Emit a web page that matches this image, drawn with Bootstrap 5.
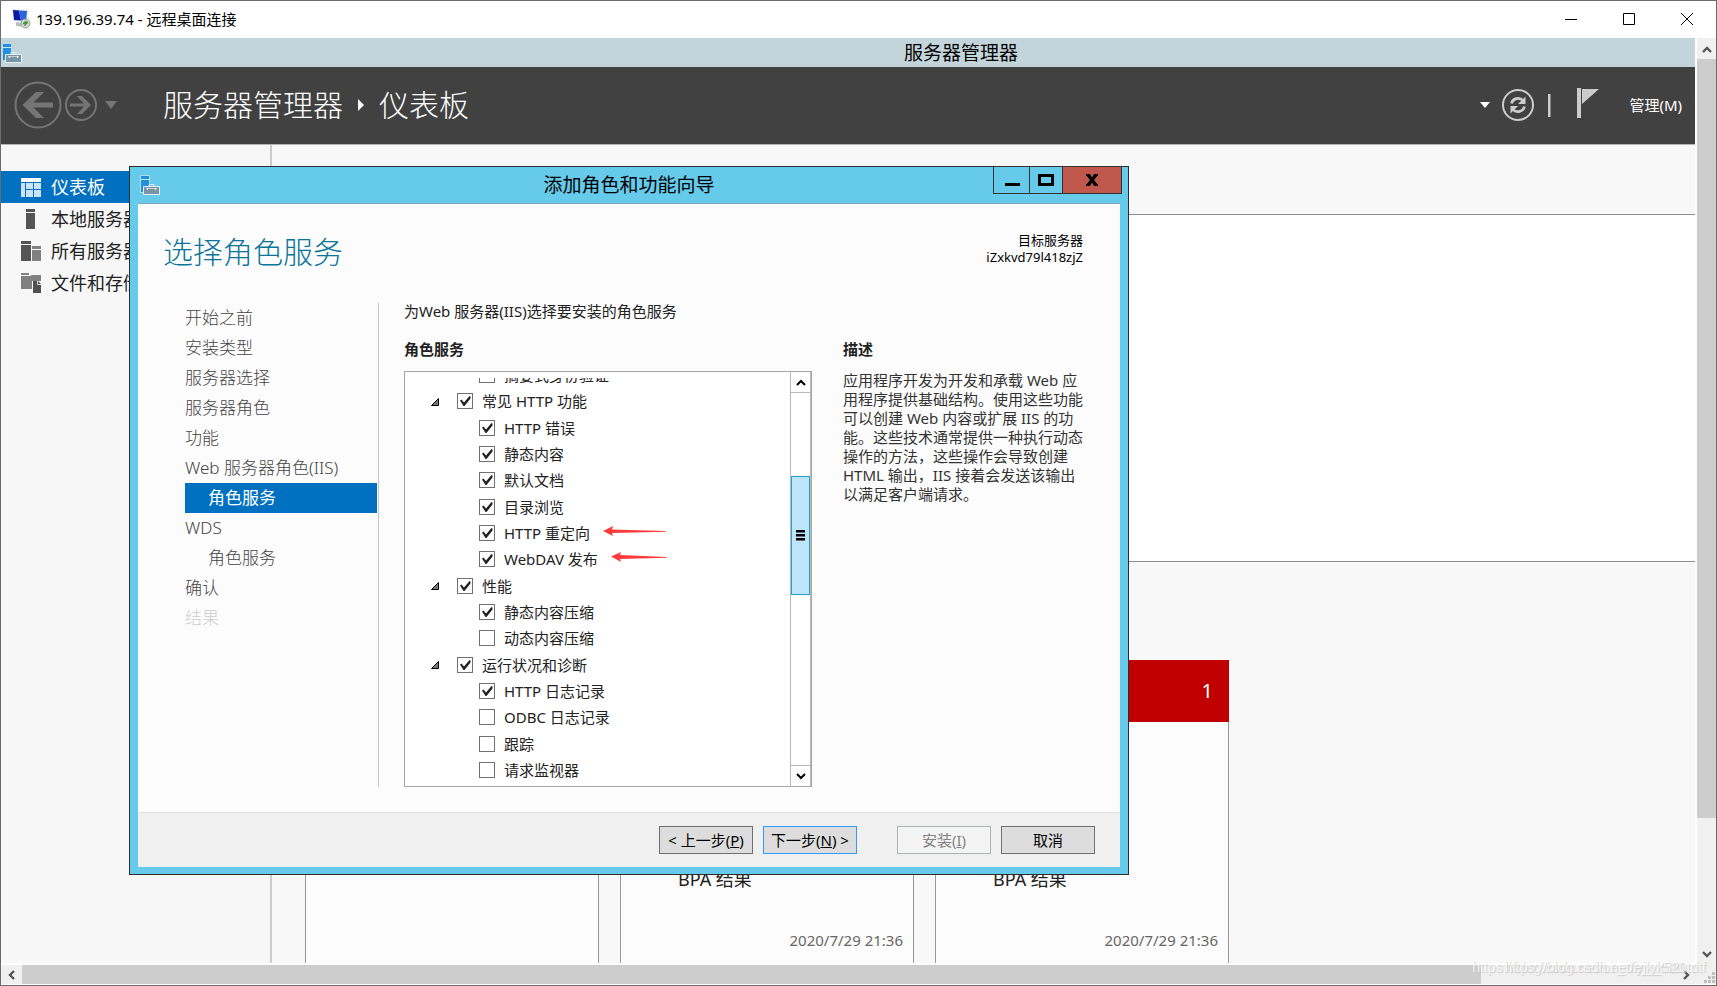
<!DOCTYPE html>
<html lang="zh-CN">
<head>
<meta charset="utf-8">
<meta name="viewport" content="width=device-width, initial-scale=1">
<title>139.196.39.74 - 远程桌面连接</title>
<link href="https://cdn.jsdelivr.net/npm/bootstrap@5.3.0/dist/css/bootstrap.min.css" rel="stylesheet">
<style>
:root { --ui: "Noto Sans", "Noto Sans CJK SC", sans-serif; --accent: #0070c0; --aero: #66caea; }
body { font: 15px/20px var(--ui); color: #222; background: #fff; }
button { font-family: inherit; color: inherit; }
svg { display: block; flex: none; }
a { color: inherit; text-decoration: none; }
.session { height: 100vh; border: 1px solid #6b6b6b; }
.session-title { height: 37px; background: #fff; color: #000; padding-left: 10px; padding-bottom: 1px; }
.session-name { margin-left: 5px; }
.cap { width: 58px; height: 36px; border: 0; background: none; padding: 0; display: grid; place-items: center; }
.remote-row { min-height: 0; }
.remote { background: #f8f8f8; margin: 0 1px 1px 0; border: solid #fff; border-width: 0 1px 1px 0; }

/* server manager */
.sm-title { height: 29px; background: #c3d5db; color: #000; padding-left: 1px; }
.sm-title h1 { font-size: 19px; line-height: 29px; font-weight: 400; margin: 0; padding: 2px 0 0 205px; }
.sm-bar { height: 78px; background: #414141; color: #fff; padding: 0 13px 1px 13px; border-bottom: 1px solid #b5b5b5; }
.plain { border: 0; background: none; padding: 0; }
.crumbs { font-size: 30px; line-height: 40px; font-weight: 300; margin-left: 46px; gap: 15px; }
.refresh { margin: 0 13px 0 11px; }
.sm-side { width: 271px; background: #f7f7f7; border-right: 2px solid #ccc; padding-top: 26px; }
.side-item { height: 32px; font-size: 18px; padding-left: 20px; gap: 10px; color: #222; white-space: nowrap; }
.side-item.on { background: var(--accent); color: #fff; }
.sm-main { padding-top: 69px; min-width: 0; overflow: hidden; }
.welcome { height: 348px; background: #fff; border: solid #8f8f8f; border-width: 1px 0; margin-left: 34px; flex: none; }
.tiles { padding: 98px 0 0 33px; gap: 21px; }
.tile { width: 294px; background: #fcfcfc; border: 1px solid #999; border-bottom: 0; flex: none; }
.tile-head { height: 62px; background: #c3c3c3; color: #fff; font-size: 20px; margin: -1px -1px 0; padding-right: 16px; }
.tile-head.alerted { background: #c00000; }
.tile-link { font-size: 18px; line-height: 24px; padding-left: 57px; margin-top: 145px; }
.tile-time { color: #666; padding-right: 10px; margin-top: 39px; }

/* scroll bars of the session window */
.vbar { width: 19px; background: #f0f0f0; }
.hbar { height: 19px; background: #f0f0f0; margin-bottom: 1px; }
.sbtn { width: 21px; height: 21px; border: 0; padding: 0; background: #f0f0f0; display: grid; place-items: center; }
.thumb { background: #cdcdcd; }

/* wizard window */
.wizard { left: 128px; top: 128px; width: 1000px; height: 709px; border: 1px solid #2c2c2c; background: var(--aero); padding: 0 8px 8px; }
.wiz-title { height: 37px; color: #000; border-bottom: 1px solid #7ba7b6; }
.wiz-title h2 { font-size: 19px; line-height: 37px; margin: 0; font-weight: 400; }
.wiz-icon { left: 2px; top: 8px; }
.wiz-caps { right: -2px; top: -1px; }
.wcap { height: 28px; border: 1px solid #333; background: none; padding: 0; margin-left: -1px; display: grid; place-items: center; }
.w-min { width: 37px; }
.w-max { width: 34px; }
.w-close { width: 60px; background: #c1584e; }
.wiz-body { background: #fcfcfc; padding: 28px 37px 25px 25px; }
.wiz-head { height: 71px; }
.wiz-body h3 { font-size: 30px; line-height: 40px; font-weight: 300; color: #0b7499; margin: 0; }
.target { font-size: 13px; line-height: 17px; color: #000; }
.steps { width: 216px; padding: 0 1px 0 22px; border-right: 1px solid #c8c8c8; font-size: 17px; color: #444; font-weight: 300; }
.step { display: block; line-height: 30px; height: 30px; }
.step.nested { padding-left: 23px; }
.step.on { background: var(--accent); color: #fff; font-weight: 400; }
.step.off { color: #ccc; }
.picker { padding-left: 25px; margin-top: -2px; }
.picker h4, .about h4 { font-size: 15px; line-height: 20px; font-weight: 700; margin: 0; }
.picker h4 { margin-top: 18px; }
.tree { width: 408px; border: 1px solid #a6a6a6; background: #fff; margin-top: 12px; }
.tree-view { overflow: hidden; margin: 6px 0 2px; height: 406px; }
.tree-view ul { height: 421px; margin: -16px 0 0; padding: 0 0 0 25px; }
.tree-view li { flex: 1 1 0; }
.tree-view li.leaf { padding-left: 49px; }
.twist { width: 9px; margin-right: 18px; }
.tick { appearance: none; width: 16px; height: 16px; border: 1px solid #707070; background: #fff; margin: 0 9px 0 0; flex: none; }
.tick:checked { background: #fff url("data:image/svg+xml,%3Csvg xmlns='http://www.w3.org/2000/svg' viewBox='0 0 14 14'%3E%3Cpath d='M2 6.500l1.500-1 2.500 3L11.500 2l1 .5v2L6.500 12H5.500z' fill='%23222'/%3E%3C/svg%3E") center/14px; }
.point { margin: 0 0 4px 13px; }
.tree-bar { width: 21px; border-left: 1px solid #b9b9b9; border-right: 1px solid #b9b9b9; background: #fff; }
.tbtn { height: 21px; border: 0 solid #b9b9b9; background: #fff; padding: 0; display: grid; place-items: center; }
.t-up { border-bottom-width: 1px; }
.t-down { border-top-width: 1px; }
.tthumb { height: 119px; background: #bce5fb; border: 1px solid #26a0cc; display: grid; place-items: center; }
.about { width: 242px; margin: -2px 0 0 31px; padding-top: 38px; }
.about p { line-height: 19px; margin: 12px 0 0; color: #333; }
.wiz-foot { height: 55px; background: #f0f0f0; border-top: 1px solid #dfdfdf; padding-right: 25px; gap: 10px; }
.wbtn { width: 94px; height: 28px; border: 1px solid #707070; border-radius: 0; background: #ddd; color: #000; font-size: 15px; line-height: 20px; padding: 0; white-space: nowrap; }
.wbtn.primary { border-color: #3399ff; }
.wbtn:disabled { background: #f4f4f4; border-color: #adb2b5; color: #838383; opacity: 1; margin-left: 30px; }

.wm { font: 14px/18px "Liberation Sans", sans-serif; color: #ffffffaa; text-shadow: 1px 1px 1px #ccc; bottom: 9px; white-space: nowrap; pointer-events: none; }
.wm-a { right: 32px; }
.wm-b { right: 10px; }
</style>
</head>
<body>
<svg width="0" height="0" class="position-absolute" aria-hidden="true">
  <symbol id="srv" viewBox="0 0 20 20">
    <path d="M.5.5h9v17h-9z" fill="#2090de" stroke="#b5dcf2"/><path d="M1 4.500h8" stroke="#c8e6f6"/>
    <path d="M9 11V9.500h5V11" fill="none" stroke="#dbe8ee"/>
    <path d="M3.500 11.500h16v8h-16z" fill="#7894a6" stroke="#e6f0f4"/><path d="M6 13.500h11" stroke="#c3d0d8"/><path d="M7 13h1v2H7zM15 13h1v2h-1z" fill="#fff"/>
  </symbol>
</svg>
<div class="session d-flex flex-column position-relative overflow-hidden">
  <header class="session-title d-flex align-items-center flex-shrink-0">
    <svg width="20" height="20" viewBox="0 0 20 20"><path d="M1 0l16 1-1 12-13-1z" fill="#dfe3e6"/><path d="M2 1l6 .5 2 10-7-.5z" fill="#0a18a8"/><path d="M8 1.500l8 .5-1 10-5-.5z" fill="#2b62e0"/><path d="M5 13l8 1 1 4-9-1z" fill="#b9bdc0"/><circle cx="14.500" cy="14.500" r="4.500" fill="#d5dad5" stroke="#999"/><path d="M12 15l2-2v4M17 13l-2 2v-3" stroke="#3f9a3b" fill="none" stroke-width="1.300"/></svg>
    <span class="session-name flex-grow-1">139.196.39.74 - 远程桌面连接</span>
    <button class="cap" aria-label="最小化"><svg width="12" height="12"><path d="M0 6.500h12" stroke="#000"/></svg></button>
    <button class="cap" aria-label="最大化"><svg width="12" height="12"><path d="M.5.5h11v11H.5z" fill="none" stroke="#000"/></svg></button>
    <button class="cap" aria-label="关闭"><svg width="12" height="12"><path d="M0 0l12 12M12 0L0 12" stroke="#000"/></svg></button>
  </header>

  <div class="remote-row d-flex flex-grow-1">
    <main class="remote flex-grow-1 d-flex flex-column position-relative overflow-hidden">
      <div class="sm-title d-flex align-items-center flex-shrink-0">
        <svg width="20" height="20"><use href="#srv"/></svg>
        <h1 class="flex-grow-1 text-center">服务器管理器</h1>
      </div>
      <nav class="sm-bar d-flex align-items-center flex-shrink-0">
        <button class="plain" aria-label="后退"><svg width="48" height="48" viewBox="0 0 48 48"><circle cx="24" cy="24" r="22.500" fill="none" stroke="#757575" stroke-width="2"/><path d="M8.500 24L22 11h8L19.500 21.500H39v5H19.500L30 37h-8z" fill="#757575"/></svg></button>
        <button class="plain" style="margin-left:3px" aria-label="前进"><svg width="32" height="32" viewBox="0 0 32 32"><circle cx="16" cy="16" r="15" fill="none" stroke="#757575" stroke-width="2"/><path d="M26 16l-9 9h-5l7-7.500H5v-3h14L12 7h5z" fill="#757575"/></svg></button>
        <button class="plain ms-2" aria-label="历史记录"><svg width="12" height="8"><path d="M0 0h12L6 8z" fill="#757575"/></svg></button>
        <div class="crumbs d-flex align-items-center flex-grow-1"><span>服务器管理器</span><svg width="6" height="12"><path d="M0 0l6 6-6 6z" fill="#fff"/></svg><span>仪表板</span></div>
        <button class="plain" aria-label="刷新选项"><svg width="10" height="6"><path d="M0 0h10L5 6z" fill="#fff"/></svg></button>
        <button class="plain refresh" aria-label="刷新"><svg width="34" height="34" viewBox="0 0 34 34"><circle cx="17" cy="17" r="15" fill="none" stroke="#ccc" stroke-width="2"/><path d="M10.500 15.500c1-5 8-7 11.500-3" fill="none" stroke="#ccc" stroke-width="2.600"/><path d="M24.500 8.500v7.500h-7.500z" fill="#ccc"/><path d="M23.500 18.500c-1 5-8 7-11.500 3" fill="none" stroke="#ccc" stroke-width="2.600"/><path d="M9.500 25.500V18H17z" fill="#ccc"/></svg></button>
        <svg width="3" height="23" class="me-4"><path d="M0 0h2.500v23H0z" fill="#ccc"/></svg>
        <button class="plain me-3" aria-label="通知"><svg width="38" height="34" viewBox="0 0 38 34"><path d="M2 0h4v30H2zM7 1h17L7 16z" fill="#ccc"/></svg></button>
        <button class="plain">管理(M)</button>
      </nav>
      <div class="d-flex flex-grow-1 overflow-hidden">
        <aside class="sm-side flex-shrink-0">
          <a href="#" class="side-item on d-flex align-items-center"><svg width="20" height="20"><path d="M0 1h20v4H0z" fill="#fff"/><path d="M0 6h4v14H0zM5 6h7v6H5zM13 6h7v6h-7zM5 13h7v7H5zM13 13h7v7h-7z" fill="#cbe3f4"/></svg><span>仪表板</span></a>
          <a href="#" class="side-item d-flex align-items-center"><svg width="20" height="20"><path d="M5 0h9v3H5zM5 4h9v16H5z" fill="#555"/></svg><span>本地服务器</span></a>
          <a href="#" class="side-item d-flex align-items-center"><svg width="20" height="20"><path d="M0 0h10v3H0zM0 4h10v16H0z" fill="#555"/><path d="M11 5h9v3h-9zM11 9h9v11h-9z" fill="#808080"/></svg><span>所有服务器</span></a>
          <a href="#" class="side-item d-flex align-items-center"><svg width="20" height="20"><path d="M0 0h8v2H0zM0 3h9l2-1h9v6h-9v8H0z" fill="#808080"/><path d="M12 8h5l3 3v9h-8z" fill="#505050"/><path d="M16.500 8v3.500H20" stroke="#ddd" fill="none"/></svg><span>文件和存储服务</span></a>
        </aside>
        <section class="sm-main flex-grow-1 d-flex flex-column">
          <div class="welcome"></div>
          <div class="tiles d-flex flex-grow-1">
            <article class="tile"><div class="tile-head"></div></article>
            <article class="tile"><div class="tile-head"></div><div class="tile-link">BPA 结果</div><div class="tile-time text-end">2020/7/29 21:36</div></article>
            <article class="tile"><div class="tile-head alerted d-flex align-items-center justify-content-end">1</div><div class="tile-link">BPA 结果</div><div class="tile-time text-end">2020/7/29 21:36</div></article>
          </div>
        </section>
      </div>

      <section class="wizard position-absolute d-flex flex-column" role="dialog" aria-label="添加角色和功能向导">
        <header class="wiz-title position-relative text-center flex-shrink-0">
          <svg class="wiz-icon position-absolute" width="20" height="20"><use href="#srv"/></svg>
          <h2>添加角色和功能向导</h2>
          <div class="wiz-caps position-absolute d-flex">
            <button class="wcap w-min" aria-label="最小化"><svg width="16" height="14"><path d="M1 10h15v3H1z"/></svg></button>
            <button class="wcap w-max" aria-label="最大化"><svg width="16" height="12"><path d="M1.500 1.500h13v9h-13z" fill="none" stroke="#000" stroke-width="3"/></svg></button>
            <button class="wcap w-close" aria-label="关闭"><svg width="14" height="12"><path d="M1 0h4L7 3.500 9 0h4v1L9 6l4 5v1H9L7 8.500 5 12H1v-1l4-5-4-5z"/></svg></button>
          </div>
        </header>
        <div class="wiz-body flex-grow-1 d-flex flex-column">
          <div class="wiz-head d-flex justify-content-between">
            <h3>选择角色服务</h3>
            <div class="target text-end">目标服务器<br>iZxkvd79l418zjZ</div>
          </div>
          <div class="d-flex flex-grow-1">
            <nav class="steps flex-shrink-0">
              <a href="#" class="step">开始之前</a><a href="#" class="step">安装类型</a><a href="#" class="step">服务器选择</a><a href="#" class="step">服务器角色</a><a href="#" class="step">功能</a><a href="#" class="step">Web 服务器角色(IIS)</a><a href="#" class="step nested on">角色服务</a><a href="#" class="step">WDS</a><a href="#" class="step nested">角色服务</a><a href="#" class="step">确认</a><a class="step off">结果</a>
            </nav>
            <div class="picker">
              <div>为Web 服务器(IIS)选择要安装的角色服务</div>
              <h4>角色服务</h4>
              <div class="tree d-flex">
                <div class="tree-view flex-grow-1">
                  <ul class="list-unstyled d-flex flex-column">
                    <li class="leaf d-flex align-items-center"><input class="tick" type="checkbox" id="c0"><label for="c0">摘要式身份验证</label></li>
                    <li class="d-flex align-items-center"><svg class="twist" width="9" height="9"><path d="M1.500 8.500h7v-7z" fill="#777" stroke="#000"/></svg><input class="tick" type="checkbox" id="c1" checked><label for="c1">常见 HTTP 功能</label></li>
                    <li class="leaf d-flex align-items-center"><input class="tick" type="checkbox" id="c2" checked><label for="c2">HTTP 错误</label></li>
                    <li class="leaf d-flex align-items-center"><input class="tick" type="checkbox" id="c3" checked><label for="c3">静态内容</label></li>
                    <li class="leaf d-flex align-items-center"><input class="tick" type="checkbox" id="c4" checked><label for="c4">默认文档</label></li>
                    <li class="leaf d-flex align-items-center"><input class="tick" type="checkbox" id="c5" checked><label for="c5">目录浏览</label></li>
                    <li class="leaf d-flex align-items-center"><input class="tick" type="checkbox" id="c6" checked><label for="c6">HTTP 重定向</label><svg class="point" width="63" height="10" viewBox="0 0 63 10"><path d="M0 5l10-5-1 3.500 54 1.500v.8L9 7l1 3z" fill="#ff3b3b"/></svg></li>
                    <li class="leaf d-flex align-items-center"><input class="tick" type="checkbox" id="c7" checked><label for="c7">WebDAV 发布</label><svg class="point" width="56" height="10" viewBox="0 0 56 10"><path d="M0 4.500l10-4.500-1 3 47 2v.8L9 7l1 3z" fill="#ff3b3b"/></svg></li>
                    <li class="d-flex align-items-center"><svg class="twist" width="9" height="9"><path d="M1.500 8.500h7v-7z" fill="#777" stroke="#000"/></svg><input class="tick" type="checkbox" id="c8" checked><label for="c8">性能</label></li>
                    <li class="leaf d-flex align-items-center"><input class="tick" type="checkbox" id="c9" checked><label for="c9">静态内容压缩</label></li>
                    <li class="leaf d-flex align-items-center"><input class="tick" type="checkbox" id="c10"><label for="c10">动态内容压缩</label></li>
                    <li class="d-flex align-items-center"><svg class="twist" width="9" height="9"><path d="M1.500 8.500h7v-7z" fill="#777" stroke="#000"/></svg><input class="tick" type="checkbox" id="c11" checked><label for="c11">运行状况和诊断</label></li>
                    <li class="leaf d-flex align-items-center"><input class="tick" type="checkbox" id="c12" checked><label for="c12">HTTP 日志记录</label></li>
                    <li class="leaf d-flex align-items-center"><input class="tick" type="checkbox" id="c13"><label for="c13">ODBC 日志记录</label></li>
                    <li class="leaf d-flex align-items-center"><input class="tick" type="checkbox" id="c14"><label for="c14">跟踪</label></li>
                    <li class="leaf d-flex align-items-center"><input class="tick" type="checkbox" id="c15"><label for="c15">请求监视器</label></li>
                  </ul>
                </div>
                <div class="tree-bar d-flex flex-column">
                  <button class="tbtn t-up" aria-label="向上"><svg width="10" height="7"><path d="M1 6l4-4 4 4" fill="none" stroke="#000" stroke-width="2"/></svg></button>
                  <div style="flex:83"></div>
                  <div class="tthumb"><svg width="9" height="11"><path d="M0 0h9v2.500H0zM0 4h9v2.500H0zM0 8h9v2.500H0z"/></svg></div>
                  <div style="flex:171"></div>
                  <button class="tbtn t-down" aria-label="向下"><svg width="10" height="7"><path d="M1 1l4 4 4-4" fill="none" stroke="#000" stroke-width="2"/></svg></button>
                </div>
              </div>
            </div>
            <div class="about">
              <h4>描述</h4>
              <p>应用程序开发为开发和承载 Web 应用程序提供基础结构。使用这些功能可以创建 Web 内容或扩展 IIS 的功能。这些技术通常提供一种执行动态操作的方法，这些操作会导致创建 HTML 输出，IIS 接着会发送该输出以满足客户端请求。</p>
            </div>
          </div>
        </div>
        <footer class="wiz-foot d-flex align-items-center justify-content-end flex-shrink-0">
          <button class="wbtn">&lt; 上一步(<u>P</u>)</button>
          <button class="wbtn primary">下一步(<u>N</u>) &gt;</button>
          <button class="wbtn" disabled>安装(<u>I</u>)</button>
          <button class="wbtn">取消</button>
        </footer>
      </section>
    </main>
    <div class="vbar d-flex flex-column flex-shrink-0">
      <button class="sbtn w-100" aria-label="向上滚动"><svg width="10" height="8"><path d="M1 7l4-4 4 4" fill="none" stroke="#555" stroke-width="2.400"/></svg></button>
      <div class="thumb" style="flex:758"></div>
      <div style="flex:126"></div>
      <button class="sbtn w-100" aria-label="向下滚动"><svg width="10" height="8"><path d="M1 1l4 4 4-4" fill="none" stroke="#555" stroke-width="2.400"/></svg></button>
    </div>
  </div>
  <div class="hbar d-flex flex-shrink-0">
    <button class="sbtn h-100" aria-label="向左滚动"><svg width="8" height="10"><path d="M6 1L2 5l4 4" fill="none" stroke="#555" stroke-width="2.400"/></svg></button>
    <div class="thumb" style="flex:1458"></div>
    <div style="flex:194"></div>
    <button class="sbtn h-100" aria-label="向右滚动"><svg width="8" height="10"><path d="M2 1l4 4-4 4" fill="none" stroke="#555" stroke-width="2.400"/></svg></button>
    <svg width="20" height="19"><path d="M16 7h3v3h-3zM12 11h3v3h-3zM16 11h3v3h-3zM8 15h3v3H8zM12 15h3v3h-3zM16 15h3v3h-3z" fill="#bfbfbf"/></svg>
  </div>
  <div class="wm wm-a position-absolute">https://blog.csdn.net/oe_diyjk_520</div>
  <div class="wm wm-b position-absolute">https://blog.csdn.net/e_yk520tdtf</div>
</div>
<script src="https://cdn.jsdelivr.net/npm/bootstrap@5.3.0/dist/js/bootstrap.bundle.min.js"></script>
</body>
</html>
